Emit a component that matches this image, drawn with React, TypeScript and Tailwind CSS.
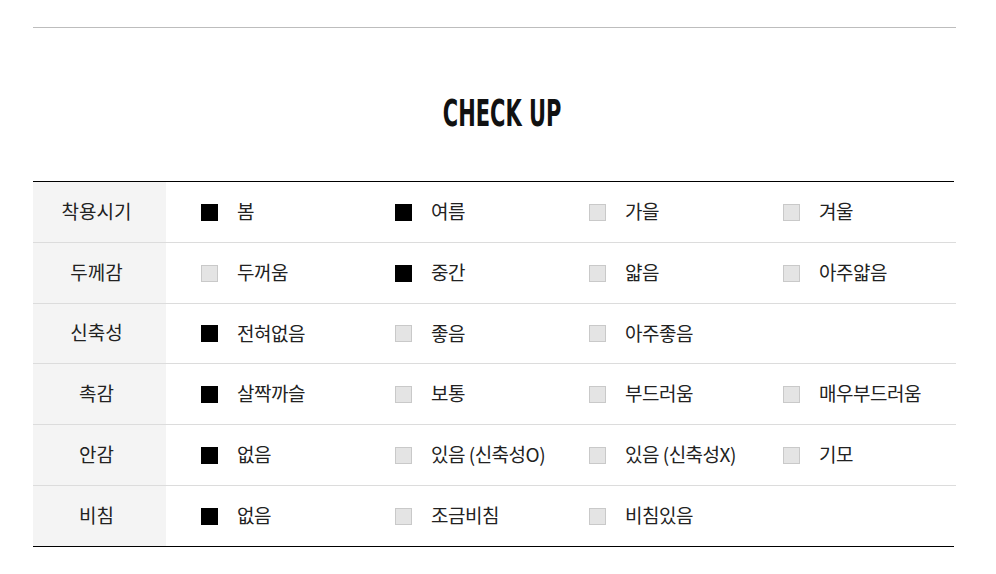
const rows: { label: string; items: { text: string; on: boolean }[] }[] = [
  {
    label: "착용시기",
    items: [
      { text: "봄", on: true },
      { text: "여름", on: true },
      { text: "가을", on: false },
      { text: "겨울", on: false },
    ],
  },
  {
    label: "두께감",
    items: [
      { text: "두꺼움", on: false },
      { text: "중간", on: true },
      { text: "얇음", on: false },
      { text: "아주얇음", on: false },
    ],
  },
  {
    label: "신축성",
    items: [
      { text: "전혀없음", on: true },
      { text: "좋음", on: false },
      { text: "아주좋음", on: false },
    ],
  },
  {
    label: "촉감",
    items: [
      { text: "살짝까슬", on: true },
      { text: "보통", on: false },
      { text: "부드러움", on: false },
      { text: "매우부드러움", on: false },
    ],
  },
  {
    label: "안감",
    items: [
      { text: "없음", on: true },
      { text: "있음 (신축성O)", on: false },
      { text: "있음 (신축성X)", on: false },
      { text: "기모", on: false },
    ],
  },
  {
    label: "비침",
    items: [
      { text: "없음", on: true },
      { text: "조금비침", on: false },
      { text: "비침있음", on: false },
    ],
  },
];

export default function App() {
  return (
    <div
      className="w-[996px] h-[574px] bg-white text-[#222]"
      style={{ fontFamily: '"Noto Sans CJK KR", "Noto Sans", sans-serif' }}
    >
      <div className="ml-[33px] w-[923px] pt-[27px]">
        <div className="h-px bg-[#bdbdbd]" />

        {/* Title */}
        <div className="h-[153px] flex items-center justify-center pt-[18px] pl-[15px]">
          <h2
            className="inline-block text-[37px] font-bold text-[#111] leading-none scale-x-[0.63]"
            style={{ fontFamily: '"DejaVu Sans Condensed", "Liberation Sans Narrow", sans-serif' }}
          >
            CHECK UP
          </h2>
        </div>

        {/* Table */}
        <div className="border-t border-b border-black mr-[2px]">
          {rows.map((row, i) => (
            <div
              key={row.label}
              className={
                "flex -mr-[2px] " +
                (i === 0
                  ? "h-[60px]"
                  : i === 2
                  ? "h-[60px] border-t border-[#dcdcdc]"
                  : "h-[61px] border-t border-[#dcdcdc]")
              }
            >
              <div className="w-[133px] shrink-0 bg-[#f4f4f4] flex items-center justify-center pr-[6px] pb-[2px] text-[19px]">
                {row.label}
              </div>
              <div className="flex-1 grid grid-cols-[194px_194px_194px_194px] pl-[35px] items-center">
                {row.items.map((item) => (
                  <div key={item.text} className="flex items-center gap-[19px]">
                    <span
                      className={
                        "w-[17px] h-[17px] shrink-0 " +
                        (item.on
                          ? "bg-black"
                          : "bg-[#e4e4e4] border border-[#c9c9c9]")
                      }
                    />
                    <span className="text-[19px] tracking-[-0.5px] leading-none pb-[3px]">
                      {item.text}
                    </span>
                  </div>
                ))}
              </div>
            </div>
          ))}
        </div>
      </div>
    </div>
  );
}
